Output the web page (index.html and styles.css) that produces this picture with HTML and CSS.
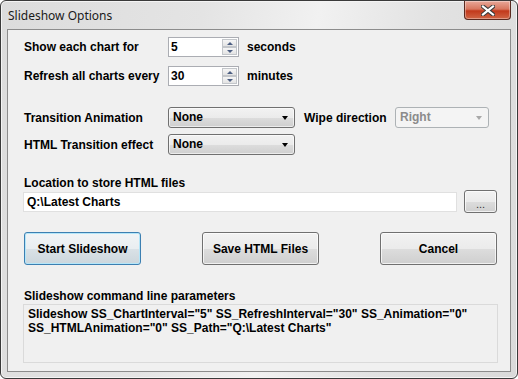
FILE: index.html
```html
<!DOCTYPE html>
<html lang="en">
<head>
    <meta charset="UTF-8">
    <meta name="viewport" content="width=device-width, initial-scale=1.0">
    <title>Slideshow Options</title>
    <link rel="stylesheet" href="styles.css">
</head>
<body>

    <div class="window">
        <!-- Barra de titulo -->
        <div class="titlebar">
            <span class="title">Slideshow Options</span>
            <div class="close-btn">
                <svg width="14" height="11" viewBox="0 0 14 11">
                    <path d="M2 1.5 L12 9.5 M12 1.5 L2 9.5" stroke="#3b3b3b" stroke-width="4.2" stroke-linecap="square"/>
                    <path d="M2 1.5 L12 9.5 M12 1.5 L2 9.5" stroke="#fff" stroke-width="2.2" stroke-linecap="square"/>
                </svg>
            </div>
        </div>

        <div class="client">
            <div class="row row-interval">
                <label class="lbl">Show each chart for</label>
                <div class="spin">
                    <span class="spin-value">5</span>
                    <div class="spin-btns">
                        <div class="spin-btn"><span class="arrow-up"></span></div>
                        <div class="spin-btn"><span class="arrow-down"></span></div>
                    </div>
                </div>
                <span class="unit">seconds</span>
            </div>

            <div class="row row-refresh">
                <label class="lbl">Refresh all charts every</label>
                <div class="spin">
                    <span class="spin-value">30</span>
                    <div class="spin-btns">
                        <div class="spin-btn"><span class="arrow-up"></span></div>
                        <div class="spin-btn"><span class="arrow-down"></span></div>
                    </div>
                </div>
                <span class="unit">minutes</span>
            </div>

            <div class="row row-anim">
                <label class="lbl">Transition Animation</label>
                <div class="combo">None<span class="combo-arrow"></span></div>
                <label class="wipe-lbl">Wipe direction</label>
                <div class="combo combo-disabled">Right<span class="combo-arrow"></span></div>
            </div>

            <div class="row row-html">
                <label class="lbl">HTML Transition effect</label>
                <div class="combo">None<span class="combo-arrow"></span></div>
            </div>

            <div class="section-lbl loc-lbl">Location to store HTML files</div>
            <div class="row row-path">
                <div class="textbox">Q:\Latest Charts</div>
                <button class="btn browse-btn">...</button>
            </div>

            <div class="row row-actions">
                <button class="btn default-btn">Start Slideshow</button>
                <button class="btn">Save HTML Files</button>
                <button class="btn">Cancel</button>
            </div>

            <div class="section-lbl params-lbl">Slideshow command line parameters</div>
            <div class="params">Slideshow SS_ChartInterval="5" SS_RefreshInterval="30" SS_Animation="0" SS_HTMLAnimation="0" SS_Path="Q:\Latest Charts"</div>
        </div>
    </div>

</body>
</html>
```

FILE: styles.css
```css
body {
    margin: 0;
    background-color: #fff;
    font-family: "Liberation Sans", Arial, sans-serif;
    font-size: 12px;
    color: #000;
}
.window {
    box-sizing: border-box;
    width: 518px;
    height: 379px;
    border: 1px solid #3a3a3a;
    border-radius: 6px;
    background: linear-gradient(100deg, #dcdcdc 0%, #e4e4e4 35%, #f1f1f1 55%, #e2e2e2 75%, #dadada 100%);
    box-shadow: inset 0 0 0 1px #f4f4f4;
    overflow: hidden;
}
.titlebar {
    height: 28px;
    display: flex;
    justify-content: space-between;
    align-items: flex-start;
}
.title {
    font-family: "Noto Sans", "Open Sans", sans-serif;
    font-size: 12px;
    padding: 6px 0 0 7px;
    color: #1a1a1a;
}
.close-btn {
    box-sizing: border-box;
    width: 47px;
    height: 19px;
    margin-right: 6px;
    border: 1px solid #5a2a20;
    border-top: none;
    border-radius: 0 0 4px 4px;
    background: linear-gradient(180deg, #e8a899 0%, #d7775f 45%, #c2391b 55%, #d06545 100%);
    box-shadow: inset 0 0 0 1px rgba(255, 255, 255, 0.35);
    display: flex;
    align-items: center;
    justify-content: center;
}
.client {
    box-sizing: border-box;
    width: 504px;
    height: 343px;
    margin-left: 6px;
    border: 1px solid #8c8c8c;
    background-color: #f0f0f0;
    padding: 7px 12px 0 16px;
    font-weight: bold;
}
.row {
    display: flex;
    align-items: center;
}
.lbl {
    width: 144px;
}
.unit {
    margin-left: 8px;
}
.row-interval, .row-refresh {
    height: 20px;
}
.row-refresh {
    margin-top: 9px;
}
.row-anim {
    margin-top: 21px;
    height: 21px;
}
.row-html {
    margin-top: 6px;
    height: 21px;
}

/* Control numerico */
.spin {
    box-sizing: border-box;
    width: 71px;
    height: 20px;
    border: 1px solid #abadb3;
    background: #fff;
    display: flex;
    justify-content: space-between;
}
.spin-value {
    padding: 2px 0 0 2px;
}
.spin-btns {
    width: 15px;
    display: flex;
    flex-direction: column;
    padding: 1px 1px 1px 0;
}
.spin-btn {
    flex: 1;
    border: 1px solid #c3c6ca;
    background: linear-gradient(180deg, #f6f6f6, #e3e3e3);
    display: flex;
    align-items: center;
    justify-content: center;
}
.arrow-up, .arrow-down {
    width: 0;
    height: 0;
    border-left: 3px solid transparent;
    border-right: 3px solid transparent;
}
.arrow-up {
    border-bottom: 3px solid #4c5e82;
}
.arrow-down {
    border-top: 3px solid #4c5e82;
}

/* Listas desplegables */
.combo {
    box-sizing: border-box;
    position: relative;
    width: 127px;
    height: 21px;
    line-height: 19px;
    padding-left: 4px;
    border: 1px solid #707070;
    border-radius: 3px;
    background: linear-gradient(180deg, #f2f2f2 0%, #ebebeb 50%, #dddddd 50%, #cfcfcf 100%);
    box-shadow: inset 0 0 0 1px rgba(255, 255, 255, 0.6);
}
.combo-arrow {
    position: absolute;
    right: 6px;
    top: 8px;
    width: 0;
    height: 0;
    border-left: 3.5px solid transparent;
    border-right: 3.5px solid transparent;
    border-top: 4px solid #000;
}
.wipe-lbl {
    margin-left: 9px;
    width: 91px;
}
.combo-disabled {
    width: 94px;
    color: #8b8b8b;
    border-color: #adb2b5;
    background: #f4f4f4;
    box-shadow: none;
}
.combo-disabled .combo-arrow {
    border-top-color: #a8a8a8;
}

.section-lbl {
    height: 14px;
    line-height: 14px;
}
.loc-lbl {
    margin-top: 21px;
}
.row-path {
    height: 23px;
    margin-left: -1px;
}
.textbox {
    box-sizing: border-box;
    width: 434px;
    height: 20px;
    line-height: 18px;
    padding-left: 3px;
    border: 1px solid #e0e0e0;
    background: #fff;
}

/* Botones */
.btn {
    box-sizing: border-box;
    font-family: "Liberation Sans", Arial, sans-serif;
    font-size: 12px;
    font-weight: bold;
    color: #000;
    border: 1px solid #707070;
    border-radius: 3px;
    background: linear-gradient(180deg, #f2f2f2 0%, #ebebeb 50%, #dddddd 50%, #cfcfcf 100%);
    box-shadow: inset 0 0 0 1px rgba(255, 255, 255, 0.7);
    padding: 0;
    cursor: pointer;
}
.browse-btn {
    width: 33px;
    height: 23px;
    margin-left: 7px;
    padding-top: 4px;
    font-size: 11px;
    font-weight: normal;
    color: #333;
}
.row-actions {
    margin-top: 19px;
    justify-content: space-between;
    width: 473px;
}
.row-actions .btn {
    width: 117px;
    height: 33px;
}
.default-btn {
    border-color: #3c7fb1;
    box-shadow: inset 0 0 0 1px #b4e6f9;
    background: linear-gradient(180deg, #f1f4f6 0%, #e9eef1 50%, #dae2e7 50%, #ccd6dc 100%);
}
.params-lbl {
    margin-top: 24px;
}
.params {
    box-sizing: border-box;
    width: 475px;
    height: 59px;
    margin: 1px 0 0 -1px;
    padding: 2px 4px 0 4px;
    border: 1px solid #dadada;
    background: #f0f0f0;
    line-height: 14px;
}
```
